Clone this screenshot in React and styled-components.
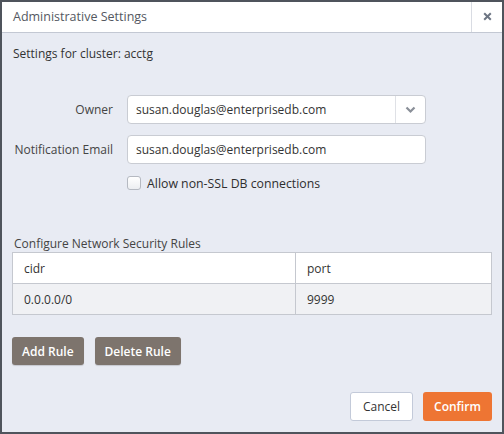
import React from "react";
import styled, { createGlobalStyle } from "styled-components";

const Global = createGlobalStyle`
  html, body { margin: 0; padding: 0; background: #4d525a; }
  * { box-sizing: border-box; }
  body { font-family: "Open Sans", "Noto Sans", sans-serif; }
`;

const Dialog = styled.div`
  width: 504px;
  height: 434px;
  border: 2px solid #4f545c;
  background: #e8ebf3;
  display: flex;
  flex-direction: column;
  color: #333;
  font-size: 12px;
`;

const Header = styled.div`
  height: 31px;
  background: #fff;
  border-bottom: 1px solid #c3c8d3;
  display: flex;
  align-items: stretch;
`;

const Title = styled.div`
  flex: 1;
  display: flex;
  align-items: center;
  padding-left: 11px;
  font-size: 12.5px;
  color: #545861;
  padding-bottom: 1px;
`;

const CloseBtn = styled.button`
  width: 31px;
  border: none;
  border-left: 1px solid #d9dce3;
  background: #fff;
  color: #6d7583;
  display: flex;
  align-items: center;
  justify-content: center;
  padding: 0 0 1px;
`;

const Body = styled.div`
  flex: 1;
  display: flex;
  flex-direction: column;
  padding: 13px 10px 11px 10px;
`;

const Intro = styled.div`
  line-height: 16px;
  padding-left: 1px;
  color: #333;
`;

const Form = styled.div`
  margin-top: 33px;
  display: grid;
  grid-template-columns: 101px 299px;
  column-gap: 14px;
  row-gap: 11px;
  align-items: center;
`;

const Label = styled.div`
  text-align: right;
  color: #444;
  font-size: 12px;
`;

const FieldBox = styled.div`
  height: 29px;
  background: #fff;
  border: 1px solid #c9ccd3;
  border-radius: 4px;
  display: flex;
  align-items: center;
  color: #333;
`;

const FieldText = styled.div`
  flex: 1;
  padding-left: 8px;
`;

const Caret = styled.div`
  width: 30px;
  align-self: stretch;
  border-left: 1px solid #dfe1e6;
  display: flex;
  align-items: center;
  justify-content: center;
`;

const CheckRow = styled.label`
  grid-column: 2;
  display: flex;
  align-items: center;
  gap: 6px;
  height: 16px;
  color: #2e2e2e;
  font-size: 12.3px;
`;

const Box = styled.span`
  width: 14px;
  height: 14px;
  border: 1px solid #b5b9c1;
  border-radius: 3px;
  background: linear-gradient(#fff, #eceef1);
`;

const SectionTitle = styled.div`
  margin-top: 45px;
  line-height: 16px;
  padding-left: 2px;
  color: #444;
`;

const Table = styled.div`
  border: 1px solid #c5c8cf;
  display: flex;
  flex-direction: column;
`;

const Row = styled.div`
  display: grid;
  grid-template-columns: 282px 1fr;
  height: ${(p) => (p.$head ? 31 : 30)}px;
  background: ${(p) => (p.$head ? "#fff" : "#f0f1f4")};
  border-bottom: ${(p) => (p.$head ? "1px solid #c5c8cf" : "none")};
`;

const Cell = styled.div`
  display: flex;
  align-items: center;
  padding-left: 11px;
  color: #333;
  border-left: ${(p) => (p.$first ? "none" : "1px solid #c5c8cf")};
`;

const ActionRow = styled.div`
  margin-top: 22px;
  display: flex;
  gap: 11px;
`;

const GrayBtn = styled.button`
  height: 28px;
  padding: 0 10px;
  background: #7d746d;
  color: #fff;
  border: none;
  border-radius: 3px;
  font-family: inherit;
  font-size: 12px;
  font-weight: 600;
  box-shadow: 0 1px 1px rgba(0,0,0,0.15);
`;

const Footer = styled.div`
  margin-top: auto;
  display: flex;
  justify-content: flex-end;
  gap: 10px;
`;

const CancelBtn = styled.button`
  height: 29px;
  width: 63px;
  background: #fff;
  border: 1px solid #c3cad9;
  border-radius: 3px;
  color: #333;
  font-family: inherit;
  font-size: 12px;
`;

const ConfirmBtn = styled.button`
  height: 29px;
  width: 69px;
  background: #ee7533;
  border: none;
  border-radius: 3px;
  color: #fff;
  font-family: inherit;
  font-size: 12px;
  font-weight: 600;
  padding-bottom: 2px;
`;

export default function App() {
  return (
    <>
      <Global />
      <Dialog>
        <Header>
          <Title>Administrative Settings</Title>
          <CloseBtn aria-label="Close">
            <svg width="9" height="9" viewBox="0 0 9 9">
              <path d="M1.2 1.2 L7.8 7.8 M7.8 1.2 L1.2 7.8" stroke="#6d7583" strokeWidth="2" />
            </svg>
          </CloseBtn>
        </Header>
        <Body>
          <Intro>Settings for cluster: acctg</Intro>
          <Form>
            <Label>Owner</Label>
            <FieldBox>
              <FieldText>susan.douglas@enterprisedb.com</FieldText>
              <Caret>
                <svg width="11" height="8" viewBox="0 0 11 8">
                  <path d="M1.5 1.5 L5.5 5.5 L9.5 1.5" fill="none" stroke="#8a8f98" strokeWidth="2.2" />
                </svg>
              </Caret>
            </FieldBox>
            <Label>Notification Email</Label>
            <FieldBox>
              <FieldText>susan.douglas@enterprisedb.com</FieldText>
            </FieldBox>
            <CheckRow>
              <Box />
              <span>Allow non-SSL DB connections</span>
            </CheckRow>
          </Form>
          <SectionTitle>Configure Network Security Rules</SectionTitle>
          <Table>
            <Row $head>
              <Cell $first>cidr</Cell>
              <Cell>port</Cell>
            </Row>
            <Row>
              <Cell $first>0.0.0.0/0</Cell>
              <Cell>9999</Cell>
            </Row>
          </Table>
          <ActionRow>
            <GrayBtn>Add Rule</GrayBtn>
            <GrayBtn>Delete Rule</GrayBtn>
          </ActionRow>
          <Footer>
            <CancelBtn>Cancel</CancelBtn>
            <ConfirmBtn>Confirm</ConfirmBtn>
          </Footer>
        </Body>
      </Dialog>
    </>
  );
}
